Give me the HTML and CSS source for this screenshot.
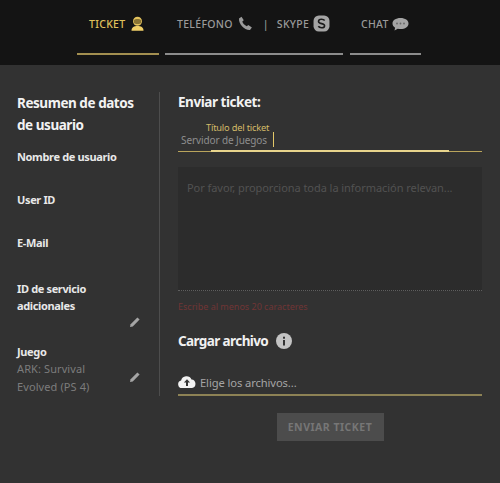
FILE: index.html
```html
<!DOCTYPE html>
<html lang="es">
<head>
<meta charset="utf-8">
<title>Enviar ticket</title>
<link rel="stylesheet" href="styles.css">
</head>
<body>
<header class="tabs">
  <div class="tab tab-ticket active"><span>TICKET</span>
    <svg class="ico" width="15" height="15" viewBox="0 0 15 15"><circle cx="7.500" cy="5.200" r="4.500" fill="#e3c25d"/><path d="M3.800 4.200c1.200-1.600 6.200-1.600 7.400 0v2.200c-1 2-6.400 2-7.400 0z" fill="#8a7434"/><path d="M1.500 14.700c0-3.300 2.500-4.700 6-4.700s6 1.400 6 4.700z" fill="#f0cf68"/></svg>
  </div>
  <div class="tab tab-phone"><span>TELÉFONO</span>
    <svg class="ico" width="15" height="15" viewBox="0 0 15 15"><path d="M1 2.500 3.500.8l2.300 3.400-1.500 1.400c.6 2 2.300 3.800 4.500 4.700l1.500-1.300 3.600 2.500-1.900 2.600C6.500 14.500.5 8 1 2.500z" fill="#9a9a9a"/></svg>
    <span class="sep">|</span><span>SKYPE</span>
    <svg class="ico ico-skype" width="17" height="17" viewBox="0 0 16 16"><rect x=".5" y=".5" width="15" height="15" rx="5" fill="#a5a5a5"/><path d="M11 5.200C10.200 4.200 9 4 8 4 6.500 4 5.200 4.700 5.200 6c0 2.700 5.700 1.500 5.700 4 0 1.200-1.300 2-2.900 2-1.200 0-2.300-.4-3-1.400" fill="none" stroke="#1a1a1a" stroke-width="1.500"/></svg>
  </div>
  <div class="tab tab-chat"><span>CHAT</span>
    <svg class="ico ico-chat" width="17" height="13" viewBox="0 0 17 13"><path d="M8.500 0C3.800 0 .5 2.300.5 5.500c0 1.800 1 3.200 2.600 4.200L2.500 12.500l3.300-1.700c.9.200 1.800.3 2.700.3 4.700 0 8-2.400 8-5.600S13.200 0 8.500 0z" fill="#a5a5a5"/><circle cx="5" cy="5.500" r=".9" fill="#666"/><circle cx="8.500" cy="5.500" r=".9" fill="#666"/><circle cx="12" cy="5.500" r=".9" fill="#666"/></svg>
  </div>
</header>
<main class="content">
  <aside class="side">
    <h2 class="side-title">Resumen de datos de usuario</h2>
    <div class="field field-name">Nombre de usuario</div>
    <div class="field field-id">User ID</div>
    <div class="field field-mail">E-Mail</div>
    <div class="field field-extra">ID de servicio adicionales
      <svg class="pencil" width="10" height="10" viewBox="0 0 10 10"><path d="M0 10l.6-2.800L7.400.4l2.200 2.200L2.800 9.400z" fill="#a5a5a5"/></svg>
    </div>
    <div class="field field-game">Juego
      <div class="value">ARK: Survival Evolved (PS 4)</div>
      <svg class="pencil" width="10" height="10" viewBox="0 0 10 10"><path d="M0 10l.6-2.800L7.400.4l2.200 2.200L2.800 9.400z" fill="#a5a5a5"/></svg>
    </div>
  </aside>
  <section class="form">
    <h2 class="form-title">Enviar ticket:</h2>
    <div class="title-field">
      <label class="float-label">Título del ticket</label>
      <div class="input-row"><span>Servidor de Juegos</span><i class="caret"></i></div>
      <div class="focus-line"></div>
    </div>
    <div class="textarea">Por favor, proporciona toda la información relevan...</div>
    <p class="error">Escribe al menos 20 caracteres</p>
    <h2 class="upload-title">Cargar archivo
      <svg class="info" width="16" height="16" viewBox="0 0 16 16"><circle cx="8" cy="8" r="8" fill="#c4c4c4"/><rect x="7" y="7" width="2" height="5.500" fill="#333"/><rect x="7" y="3.700" width="2" height="2" fill="#333"/></svg>
    </h2>
    <div class="file">
      <svg width="18" height="12" viewBox="0 0 18 12"><path d="M4 12a3.800 3.800 0 0 1-.9-7.500A5.500 5.500 0 0 1 13.500 3.500 4.300 4.300 0 0 1 14 12z" fill="#f2f2f2"/><path d="M9 3.200 5.900 6.500H8V10h2V6.500h2.100z" fill="#333"/></svg>
      <span>Elige los archivos...</span>
    </div>
    <div class="actions"><button class="submit" type="button">ENVIAR TICKET</button></div>
  </section>
</main>
</body>
</html>
```
FILE: styles.css
```css
* { box-sizing: border-box; }
html, body { margin: 0; height: 100%; }
body {
  width: 500px;
  height: 483px;
  overflow: hidden;
  background: #323232;
  font-family: "Noto Sans", "Open Sans", sans-serif;
  color: #e8e8e8;
}
.tabs {
  height: 65px;
  background: #141414;
  display: flex;
  gap: 6px;
  padding: 0 0 0 77px;
  font-size: 10.500px;
  font-weight: 500;
  color: #9a9a9a;
  letter-spacing: .3px;
}
.tab {
  height: 55px;
  padding-top: 16px;
  border-bottom: 2px solid #8c8c8c;
  display: flex;
  align-items: flex-start;
  line-height: 16px;
}
.tab .ico { margin-left: 5px; }
.tab-ticket { width: 82px; padding-left: 12px; }
.tab-phone { width: 178px; padding-left: 12px; }
.tab-chat { width: 71px; padding-left: 11px; margin-left: 1px; }
.tab .ico-skype { margin-left: 4px; margin-top: -1px; }
.tab .ico-chat { margin-left: 3px; margin-top: 2px; }
.tab.active { color: #e0c25c; border-bottom-color: #a38f50; }
.sep { margin: 0 8px 0 10px; }
.content { display: flex; padding-top: 27px; }
.side {
  width: 143px;
  height: 304px;
  margin-left: 17px;
  margin-right: 18px;
  border-right: 1px solid #4d4d4d;
  padding-right: 15px;
  flex: none;
  font-size: 11px;
  font-weight: 700;
}
.side-title {
  margin: 0;
  font-size: 13.500px;
  line-height: 22px;
  letter-spacing: -.45px;
  font-weight: 700;
  color: #f2f2f2;
}
.field { line-height: 17px; letter-spacing: -.35px; position: relative; color: #e8e8e8; }
.field-name { margin-top: 12px; }
.field-id { margin-top: 26px; }
.field-mail { margin-top: 26px; }
.field-extra { margin-top: 29px; padding-bottom: 21px; }
.field-game { margin-top: 8px; }
.field-extra .pencil { position: absolute; right: 4px; top: 37px; }
.field-game .pencil { position: absolute; right: 4px; top: 29px; }
.value { font-weight: 400; color: #7c7c7c; line-height: 18px; padding-right: 20px; letter-spacing: .1px; }
.form { width: 304px; flex: none; }
.form-title {
  margin: -1px 0 1px;
  font-size: 13.500px;
  line-height: 22px;
  letter-spacing: -.45px;
  color: #f2f2f2;
}
.title-field {
  height: 38px;
  position: relative;
  border-bottom: 1px solid #b9a45c;
}
.float-label {
  position: absolute;
  left: 28px;
  top: 8px;
  font-size: 9.300px;
  line-height: 12px;
  letter-spacing: -.2px;
  color: #d4bb68;
}
.input-row {
  position: absolute;
  top: 18px;
  left: 3px;
  height: 17px;
  display: flex;
  font-size: 10px;
  line-height: 17px;
  color: #8e8e8e;
  letter-spacing: -.1px;
}
.caret { display: block; width: 1px; height: 15px; background: #e2c768; margin-left: 6px; }
.focus-line {
  position: absolute;
  left: 33px;
  width: 238px;
  bottom: -1px;
  height: 2px;
  background: #e8d48c;
}
.textarea {
  margin-top: 15px;
  height: 124px;
  background: #2c2c2c;
  border-bottom: 1px dotted #5f5f5f;
  padding: 13px 9px;
  font-size: 11px;
  line-height: 16px;
  color: #525252;
  letter-spacing: -.05px;
}
.error {
  margin: 10px 0 0;
  font-size: 9px;
  line-height: 12px;
  color: #703535;
}
.upload-title {
  margin: 17px 0 0;
  display: flex;
  align-items: center;
  font-size: 13.500px;
  line-height: 22px;
  letter-spacing: -.6px;
  color: #f0f0f0;
}
.info { margin-left: 8px; }
.file {
  margin-top: 18px;
  height: 26px;
  border-bottom: 2px solid #8d8255;
  display: flex;
  align-items: center;
  gap: 4px;
  font-size: 11.200px;
  color: #a5a5a5;
  letter-spacing: -.1px;
}
.actions { display: flex; justify-content: center; margin-top: 17px; }
.submit {
  width: 107px;
  height: 28px;
  border: 0;
  padding: 0;
  background: #4c4c4c;
  color: #767676;
  font-family: inherit;
  font-size: 10.500px;
  font-weight: 700;
  letter-spacing: .5px;
}
```
